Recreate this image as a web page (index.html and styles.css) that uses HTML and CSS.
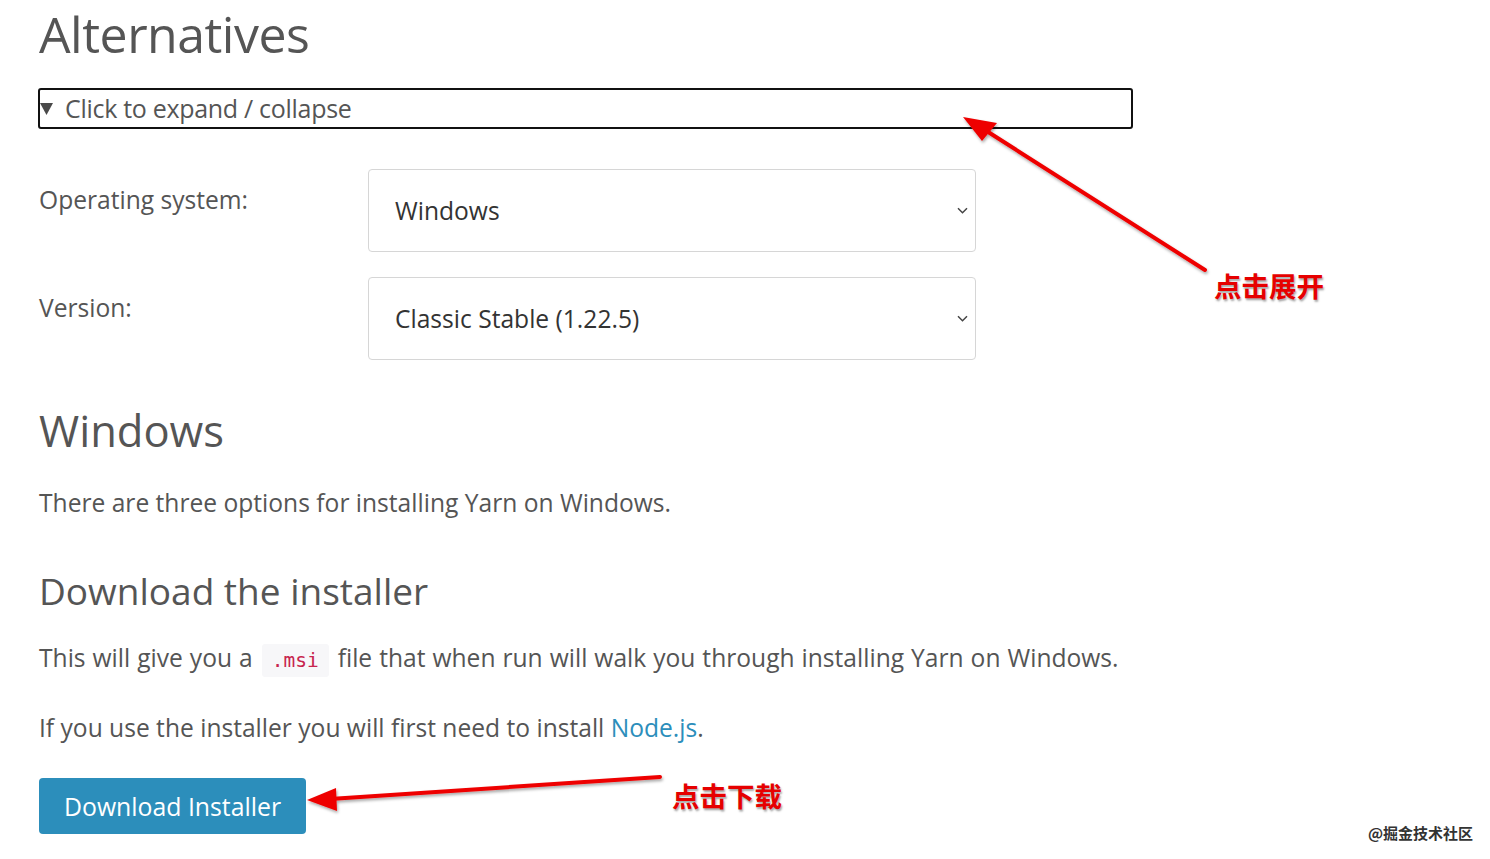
FILE: index.html
```html
<!DOCTYPE html>
<html lang="en">
 <head>
   <title>Alternatives</title>
   <meta charset="utf-8"/>
   <link rel="stylesheet" href="styles.css">
 </head>

 <body>
   <div id="wrap">
      <section id="content">
         <h1 class="title">Alternatives</h1>

         <div class="toggle"><svg class="tri" width="13" height="12" viewBox="0 0 13 12"><polygon points="0,0 13,0 6.5,12" fill="#4a4a4a"/></svg>Click to expand / collapse</div>

         <div class="form">
            <div class="row">
               <span class="label">Operating system:</span>
               <div class="pick">
                  <span>Windows</span>
                  <svg class="chev" width="11" height="7" viewBox="0 0 11 7"><path d="M1 1.2 L5.5 5.7 L10 1.2" fill="none" stroke="#444" stroke-width="1.5"/></svg>
               </div>
            </div>
            <div class="row">
               <span class="label">Version:</span>
               <div class="pick">
                  <span>Classic Stable (1.22.5)</span>
                  <svg class="chev" width="11" height="7" viewBox="0 0 11 7"><path d="M1 1.2 L5.5 5.7 L10 1.2" fill="none" stroke="#444" stroke-width="1.5"/></svg>
               </div>
            </div>
         </div>

         <h2 class="os">Windows</h2>
         <p class="txt">There are three options for installing Yarn on Windows.</p>

         <h3 class="sub">Download the installer</h3>
         <p class="txt wide">This will give you a <code>.msi</code> file that when run will walk you through installing Yarn on Windows.</p>
         <p class="txt">If you use the installer you will first need to install <a href="#">Node.js</a>.</p>

         <a class="btn" href="#">Download Installer</a>
      </section>

      <!-- 표시용 화살표 -->
      <svg class="marks" width="1490" height="859" viewBox="0 0 1490 859">
         <defs>
            <filter id="sh" x="-20%" y="-20%" width="140%" height="140%">
               <feDropShadow dx="1" dy="2" stdDeviation="1.5" flood-color="#000" flood-opacity="0.35"/>
            </filter>
         </defs>
         <g filter="url(#sh)" fill="#ee0000" stroke="#ee0000">
            <line x1="1205" y1="270" x2="985" y2="130" stroke-width="4" stroke-linecap="round"/>
            <polygon points="963,117 997,123 982,141" stroke="none"/>
            <line x1="660" y1="777" x2="330" y2="799" stroke-width="4" stroke-linecap="round"/>
            <polygon points="307,800 336,788 337,811" stroke="none"/>
         </g>
      </svg>
      <span class="note note1">点击展开</span>
      <span class="note note2">点击下载</span>
      <span class="mark">@掘金技术社区</span>
   </div>
 </body>
</html>
```

FILE: styles.css
```css
/*####### 초기화 #######*/
*{margin:0; padding:0; box-sizing:border-box;}

body{background-color:#fff; color:#4d4d4d; font-family:"Open Sans", "Noto Sans", sans-serif; overflow:hidden;}
#wrap{position:relative; width:1490px; height:859px;}
#content{padding:0 0 0 39px;}

/*####### 제목 #######*/
.title{font-size:50px; font-weight:400; line-height:68px; color:#555; letter-spacing:-0.5px;}

/*####### 펼치기 #######*/
.toggle{display:flex; align-items:center; width:1095px; height:41px; margin:20px 0 0 -1px; border:2px solid #111; border-radius:3px; font-size:25px; line-height:37px; color:#555; letter-spacing:-0.3px;}
.tri{display:block; margin:0 12px 0 0; flex:none;}

/*####### 선택 영역 #######*/
.form{margin-top:40px; display:flex; flex-direction:column; gap:25px;}
.row{display:flex; align-items:flex-start;}
.label{width:329px; font-size:24.6px; line-height:30px; padding-top:16px; color:#555;}
.pick{width:608px; height:83px; border:1px solid #d6d6d6; border-radius:4px; display:flex; align-items:center; justify-content:space-between; padding:0 7px 0 26px; font-size:24.6px; color:#333;}
.chev{display:block;}

/*####### 본문 #######*/
.os{font-size:43.5px; font-weight:400; color:#555; margin-top:41px; line-height:60px;}
.txt{font-size:24.6px; line-height:32px; margin-top:26px; color:#555;}
.sub{font-size:37px; font-weight:400; color:#555; margin-top:48px; line-height:48px;}
.sub + .txt{margin-top:27px;}
.wide{word-spacing:0.6px;}
code{font-family:"DejaVu Sans Mono", monospace; font-size:19.5px; color:#c7254e; background-color:#f7f7f9; padding:5px 10px; border-radius:3px; margin:0 2px;}
.txt a{color:#2c8ebb; text-decoration:none;}
.txt + .txt{margin-top:35px;}

.btn{display:inline-block; margin-top:34px; background-color:#2c8ebb; color:#fff; text-decoration:none; font-size:24.8px; line-height:56px; height:56px; padding:0 25px; border-radius:4px;}

/*####### 표시 #######*/
.marks{position:absolute; left:0; top:0;}
.note{position:absolute; font-family:"Noto Sans CJK SC", sans-serif; font-weight:700; font-size:27.5px; color:#e60000; text-shadow:1px 2px 2px rgba(0,0,0,0.35); line-height:1;}
.note1{left:1214px; top:272px;}
.note2{left:672px; top:782px;}
.mark{position:absolute; left:1368px; top:825px; font-family:"Noto Sans CJK SC", sans-serif; font-weight:700; font-size:15px; color:#333; line-height:1;}
```
